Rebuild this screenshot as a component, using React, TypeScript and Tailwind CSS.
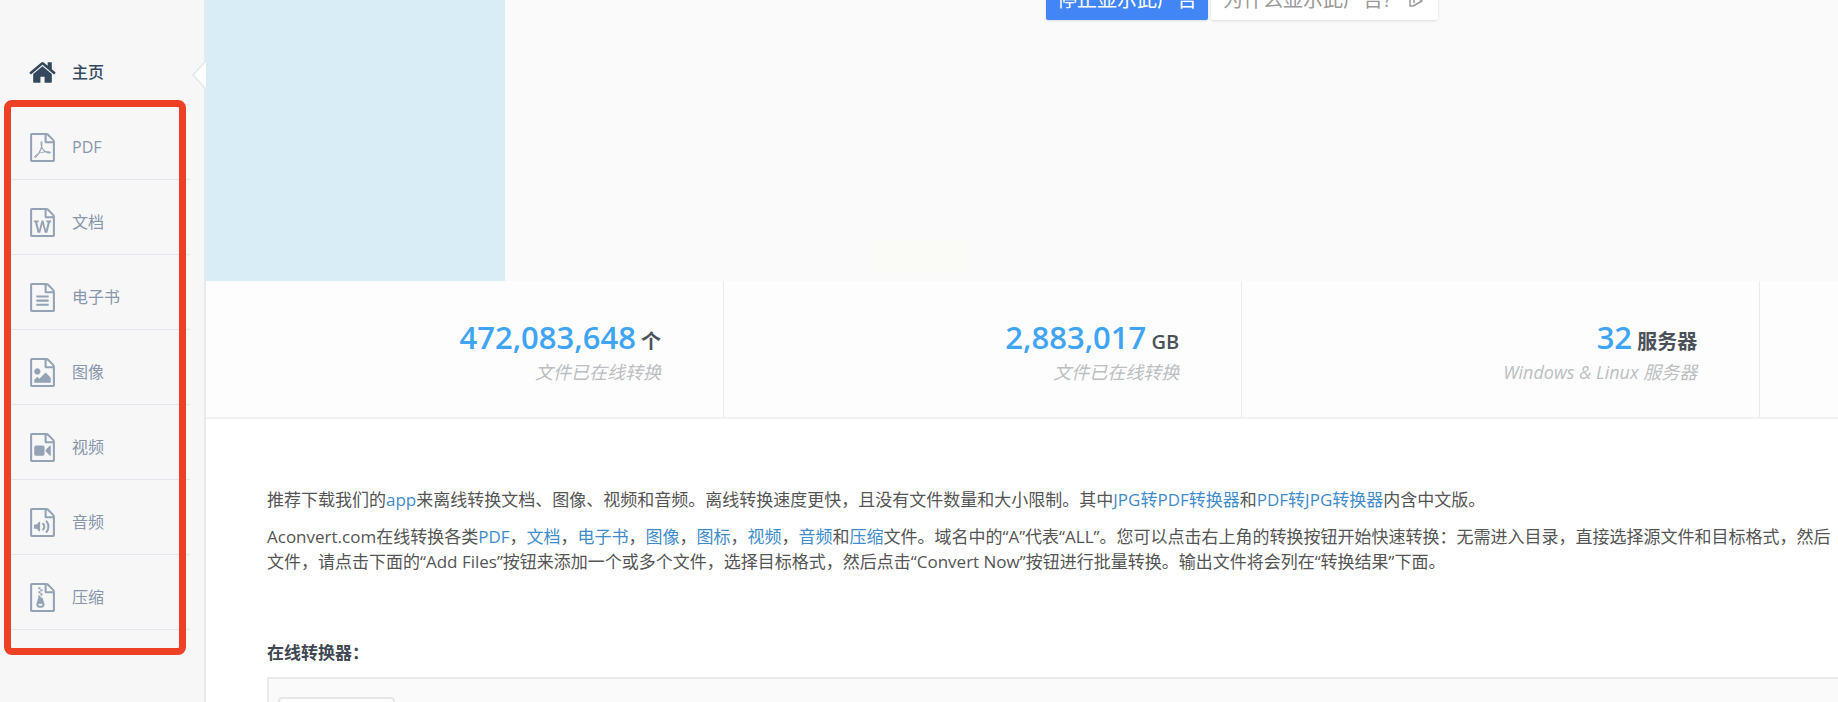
const FILE =
  'M1596 380q28 28 48 76t20 88v1152q0 40-28 68t-68 28h-1344q-40 0-68-28t-28-68v-1600q0-40 28-68t68-28h896q40 0 88 20t76 48zm-444-244v376h376q-10-29-22-41l-313-313q-12-12-41-22zm384 1528v-1024h-416q-40 0-68-28t-28-68v-416h-768v1536h1280z';

const HOME =
  'M1472 992v480q0 26-19 45t-45 19h-384v-384h-256v384h-384q-26 0-45-19t-19-45v-480q0-1 .5-3t.5-3l575-474 575 474q1 2 1 6zm223-69l-62 74q-8 9-21 11h-3q-13 0-21-7l-692-577-692 577q-12 8-24 7-13-2-21-11l-62-74q-8-10-7-23.5t11-21.5l719-599q32-26 76-26t76 26l244 204v-195q0-14 9-23t23-9h192q14 0 23 9t9 23v408l219 182q10 8 11 21.5t-7 23.5z';

const categories = [
  {
    label: 'PDF',
    icon: 'M1022 1071q33 26 84 56 59-7 117-7 147 0 177 49 16 22 2 52 0 1-1 2l-2 2v1q-6 38-71 38-48 0-115-20t-130-53q-221 24-392 83-153 262-242 262-15 0-28-7l-24-12q-1-1-6-5-10-10-6-36 9-40 56-91.5t132-96.5q14-9 23 6 2 2 2 4 52-85 107-197 68-136 104-262-24-82-30.5-159.5t6.5-127.5q11-40 42-40h22q23 0 35 15 18 21 9 68-2 6-4 8 1 3 1 8v30q-2 123-14 192 55 164 146 238zm-576 411q52-24 137-158-51 40-87.5 84t-49.5 74zm398-920q-15 42-2 132 1-7 7-44 0-3 7-43 1-4 4-8-1-1-1-2-1-2-1-3-1-22-13-36 0 1-1 2v2zm-124 661q135-54 284-81-2-1-13-9.5t-16-13.5q-76-67-127-176-27 86-83 197-30 56-45 83zm646-16q-24-24-140-24 76 28 124 28 14 0 18-1 0-1-2-3z',
  },
  {
    label: '文档',
    icon: 'M361 768v107h70l164 661h159l128-485q7-20 10-46 2-16 2-24h4l3 24q1 3 3.5 20t5.5 26l128 485h159l164-661h70v-107h-300v107h90l-99 438q-5 20-7 46l-2 21h-4q0-3-.5-6.5t-1.5-8-1-6.5q-1-5-4-21t-5-25l-144-545h-114l-144 545q-2 9-4.5 24.5t-3.5 21.5l-4 21h-4l-2-21q-2-26-7-46l-99-438h90v-107h-300z',
  },
  {
    label: '电子书',
    icon: 'M512 800q0-14 9-23t23-9h704q14 0 23 9t9 23v64q0 14-9 23t-23 9h-704q-14 0-23-9t-9-23v-64zm736 224q14 0 23 9t9 23v64q0 14-9 23t-23 9h-704q-14 0-23-9t-9-23v-64q0-14 9-23t23-9h704zm0 256q14 0 23 9t9 23v64q0 14-9 23t-23 9h-704q-14 0-23-9t-9-23v-64q0-14 9-23t23-9h704z',
  },
  {
    label: '图像',
    icon: 'M1408 1216v320h-1024v-192l192-192 128 128 384-384zm-832-192q-80 0-136-56t-56-136 56-136 136-56 136 56 56 136-56 136-136 56z',
  },
  {
    label: '视频',
    icon: 'M896 768q52 0 90 38t38 90v384q0 52-38 90t-90 38h-384q-52 0-90-38t-38-90v-384q0-52 38-90t90-38h384zm492 2q20 8 20 30v576q0 22-20 30-8 2-12 2-14 0-23-9l-265-266v-90l265-266q9-9 23-9 4 0 12 2z',
  },
  {
    label: '音频',
    icon: 'M730 850q20 8 20 30v544q0 22-20 30-8 2-12 2-12 0-23-9l-166-167h-131q-14 0-23-9t-9-23v-192q0-14 9-23t23-9h131l166-167q16-15 35-7zm417 689q31 0 50-24 129-159 129-363t-129-363q-16-21-43-24t-47 14q-21 17-23.5 43.5t14.5 47.5q100 123 100 282t-100 282q-17 21-14.5 47.5t23.5 42.5q18 15 40 15zm-211-148q27 0 47-20 87-93 87-219t-87-219q-18-19-45-20t-46 17-20 44.5 18 46.5q52 57 52 131t-52 131q-19 20-18 46.5t20 44.5q20 17 44 17z',
  },
  {
    label: '压缩',
    icon: 'M768 384v-128h-128v128h128zm128 128v-128h-128v128h128zm-128 128v-128h-128v128h128zm128 128v-128h-128v128h128zM909 943l107 349q8 27 8 52 0 83-72.5 137.5t-183.5 54.5-183.5-54.5-72.5-137.5q0-25 8-52 21-63 120-396v-128h128v128h79q22 0 39 13t23 34zm-141 465q53 0 90.5-19t37.5-45-37.5-45-90.5-19-90.5 19-37.5 45 37.5 45 90.5 19z',
  },
];

const stats = [
  { value: '472,083,648', unit: '个', note: '文件已在线转换' },
  { value: '2,883,017', unit: 'GB', note: '文件已在线转换' },
  { value: '32', unit: '服务器', note: 'Windows & Linux 服务器' },
];

function Icon({ paths }: { paths: string[] }) {
  return (
    <svg viewBox="0 0 1792 1792" className="size-[29px] shrink-0" fill="currentColor" aria-hidden="true">
      {paths.map((d) => (
        <path key={d} d={d} />
      ))}
    </svg>
  );
}

function TextLink({ children }: { children: string }) {
  return (
    <a href="#" className="text-[#3f8ccb]">
      {children}
    </a>
  );
}

function Sidebar() {
  return (
    <aside className="relative w-[206px] shrink-0 border-r-2 border-[#e6eaee] bg-[#f7f7f7] pt-10">
      <nav className="pr-[14px] pl-2">
        <a href="#" className="flex h-[65px] items-center gap-[15px] border-b border-[#e6eaee] pl-5 font-medium text-[#34495e]">
          <Icon paths={[HOME]} />
          主页
        </a>
        {categories.map((c) => (
          <a
            key={c.label}
            href="#"
            className="flex h-[75px] items-center gap-[15px] border-b border-[#e1e7ed] pt-[10px] pl-5 text-[#8796ad]"
          >
            <span className="text-[#94a2b6]">
              <Icon paths={[FILE, c.icon]} />
            </span>
            {c.label}
          </a>
        ))}
      </nav>
      {/* active page marker */}
      <svg viewBox="0 0 14 28" className="absolute top-[61px] -right-[2px] h-7 w-[14px]" aria-hidden="true">
        <path d="M14 0L1 14L14 28" fill="#fff" stroke="#e1e7ed" strokeWidth="1.5" />
      </svg>
      {/* highlight around the categories */}
      <div className="pointer-events-none absolute top-[100px] left-1 h-[555px] w-[182px] rounded-[8px] border-7 border-[#ed4024]" />
    </aside>
  );
}

function AdBanner() {
  return (
    <section className="relative flex h-[281px] items-start overflow-hidden bg-[#fafafa]">
      <div className="h-full w-[299px] shrink-0 bg-[#d9edf7]" />
      <div className="absolute top-[240px] left-[664px] h-8 w-[100px] bg-[#fafaf6]" />
      <div className="-mt-5 ml-[541px] flex shrink-0 gap-[3px] text-xl">
        <button className="h-10 w-[162px] rounded-xs bg-[#4285f4] text-white shadow">停止显示此广告</button>
        <button className="flex h-10 w-[227px] items-center rounded-xs bg-white pl-3 text-[#9a9a9a] shadow">
          为什么显示此广告?
          <svg viewBox="0 0 16 16" className="ml-4 size-4" fill="none" stroke="currentColor" strokeWidth="1.5" aria-hidden="true">
            <path d="M2 1v13h3l9-5z" strokeLinejoin="round" />
            <path d="M6 8v3" />
          </svg>
        </button>
      </div>
    </section>
  );
}

function Stats() {
  return (
    <section className="grid grid-cols-[20fr_20fr_20fr_3fr] border-b-2 border-[#f1f2f4] bg-[#fdfdfd]">
      {stats.map((s) => (
        <div key={s.unit} className="h-[136px] border-r border-[#e9eaf0] pt-9 pr-[62px] text-right">
          <div className="text-xl leading-10 font-semibold text-[#4b5158]">
            <span className="text-[31px] text-[#3fa4f4]">{s.value}</span> {s.unit}
          </div>
          <div className="text-lg leading-5 text-[#bcbfc2] italic">{s.note}</div>
        </div>
      ))}
    </section>
  );
}

export default function App() {
  return (
    <div className="flex h-screen overflow-hidden bg-white font-['Open_Sans','Noto_Sans_CJK_SC',sans-serif] text-base text-[#555]">
      <Sidebar />
      <main className="min-w-0 flex-1">
        <AdBanner />
        <Stats />
        <section className="pt-[68px] pl-[61px] text-[17px] leading-[25px] whitespace-nowrap">
          <p>
            推荐下载我们的<TextLink>app</TextLink>来离线转换文档、图像、视频和音频。离线转换速度更快，且没有文件数量和大小限制。其中
            <TextLink>JPG转PDF转换器</TextLink>和<TextLink>PDF转JPG转换器</TextLink>内含中文版。
          </p>
          <p className="mt-3">
            Aconvert.com在线转换各类<TextLink>PDF</TextLink>，<TextLink>文档</TextLink>，<TextLink>电子书</TextLink>，
            <TextLink>图像</TextLink>，<TextLink>图标</TextLink>，<TextLink>视频</TextLink>，<TextLink>音频</TextLink>和
            <TextLink>压缩</TextLink>
            文件。域名中的“A”代表“ALL”。您可以点击右上角的转换按钮开始快速转换：无需进入目录，直接选择源文件和目标格式，然后
            <br />
            文件，请点击下面的“Add Files”按钮来添加一个或多个文件，选择目标格式，然后点击“Convert Now”按钮进行批量转换。输出文件将会列在“转换结果”下面。
          </p>
          <h2 className="mt-[66px] font-semibold text-[#3f4852]">在线转换器：</h2>
          <div className="mt-3 h-40 rounded-tl-xs border-2 border-r-0 border-[#e9e9e9] bg-[#fafafa] pt-[18px] pl-[9px]">
            <div className="h-10 w-[117px] rounded-sm border-2 border-[#e6e6e6] bg-[#fdfdfd]" />
          </div>
        </section>
      </main>
    </div>
  );
}
